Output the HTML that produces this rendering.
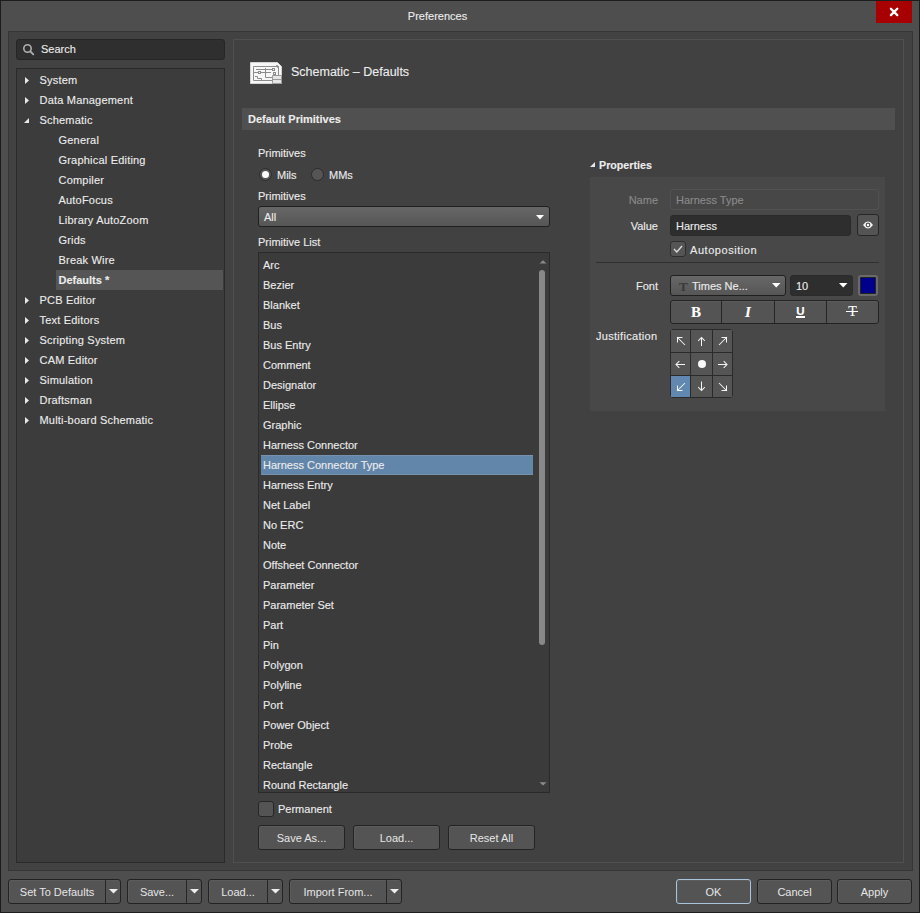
<!DOCTYPE html>
<html><head><meta charset="utf-8">
<style>
*{margin:0;padding:0;box-sizing:border-box}
html,body{width:920px;height:913px;overflow:hidden;background:#1c1c1c}
body{font-family:"Liberation Sans",sans-serif;font-size:11px;color:#ececec;position:relative}
.a{position:absolute}
.t{position:absolute;height:20px;line-height:20px;white-space:nowrap;-webkit-text-stroke:0.12px currentColor}
.b{font-weight:bold}
.btn{position:absolute;background:#545454;box-shadow:inset 1px 1px #5c5c5c;border:1px solid #232323;border-radius:3px;text-align:center;color:#e6e6e6;line-height:24px;height:25px}
.split{position:absolute;top:0;bottom:0;width:1px;background:#262626}
</style></head><body>
<div class="a" style="left:1px;top:1px;width:918px;height:911px;background:#4e4e4e"></div>
<div class="t" style="left:0;top:6px;width:875px;text-align:center">Preferences</div>
<div class="a" style="left:876px;top:1px;width:36px;height:22px;background:#a80000"></div>
<svg class="a" style="left:889px;top:6px" width="11" height="11"><path d="M1.9 2.7L8.3 9.1M8.3 2.7L1.9 9.1" stroke="#fff" stroke-width="2.3" stroke-linecap="round"/></svg>

<!-- content frame -->
<div class="a" style="left:8px;top:31px;width:905px;height:840px;background:#424242;border:1px solid #363636"></div>

<!-- search -->
<div class="a" style="left:16px;top:39px;width:209px;height:21px;background:#2f2f2f;border:1px solid #262626;border-radius:3px"></div>
<svg class="a" style="left:22px;top:43px" width="14" height="14"><circle cx="5.5" cy="5.5" r="3.7" fill="none" stroke="#b0b0b0" stroke-width="1.6"/><path d="M8.3 8.3L11.3 11.3" stroke="#b0b0b0" stroke-width="1.8" stroke-linecap="round"/></svg>
<div class="t" style="left:41px;top:39px">Search</div>

<!-- tree -->
<div class="a" style="left:16px;top:68px;width:209px;height:795px;background:#3c3c3c;border:1px solid #2a2a2a"></div>
<div class="t " style="left:39.5px;top:70px;letter-spacing:0.2px">System</div>
<svg class="a" style="left:24px;top:76px" width="6" height="9"><path d="M1 1L5 4.5L1 8Z" fill="#e8e8e8"/></svg>
<div class="t " style="left:39.5px;top:90px;letter-spacing:0.2px">Data Management</div>
<svg class="a" style="left:24px;top:96px" width="6" height="9"><path d="M1 1L5 4.5L1 8Z" fill="#e8e8e8"/></svg>
<div class="t " style="left:39.5px;top:110px;letter-spacing:0.2px">Schematic</div>
<svg class="a" style="left:23px;top:117px" width="7" height="7"><path d="M1 6L6 1L6 6Z" fill="#e8e8e8"/></svg>
<div class="t " style="left:58.5px;top:130px;letter-spacing:0.2px">General</div>
<div class="t " style="left:58.5px;top:150px;letter-spacing:0.2px">Graphical Editing</div>
<div class="t " style="left:58.5px;top:170px;letter-spacing:0.2px">Compiler</div>
<div class="t " style="left:58.5px;top:190px;letter-spacing:0.2px">AutoFocus</div>
<div class="t " style="left:58.5px;top:210px;letter-spacing:0.2px">Library AutoZoom</div>
<div class="t " style="left:58.5px;top:230px;letter-spacing:0.2px">Grids</div>
<div class="t " style="left:58.5px;top:250px;letter-spacing:0.2px">Break Wire</div>
<div class="a" style="left:56px;top:270px;width:167px;height:20px;background:#555555"></div>
<div class="t b" style="left:58.5px;top:270px;font-size:11px">Defaults *</div>
<div class="t " style="left:39.5px;top:290px;letter-spacing:0.2px">PCB Editor</div>
<svg class="a" style="left:24px;top:296px" width="6" height="9"><path d="M1 1L5 4.5L1 8Z" fill="#e8e8e8"/></svg>
<div class="t " style="left:39.5px;top:310px;letter-spacing:0.2px">Text Editors</div>
<svg class="a" style="left:24px;top:316px" width="6" height="9"><path d="M1 1L5 4.5L1 8Z" fill="#e8e8e8"/></svg>
<div class="t " style="left:39.5px;top:330px;letter-spacing:0.2px">Scripting System</div>
<svg class="a" style="left:24px;top:336px" width="6" height="9"><path d="M1 1L5 4.5L1 8Z" fill="#e8e8e8"/></svg>
<div class="t " style="left:39.5px;top:350px;letter-spacing:0.2px">CAM Editor</div>
<svg class="a" style="left:24px;top:356px" width="6" height="9"><path d="M1 1L5 4.5L1 8Z" fill="#e8e8e8"/></svg>
<div class="t " style="left:39.5px;top:370px;letter-spacing:0.2px">Simulation</div>
<svg class="a" style="left:24px;top:376px" width="6" height="9"><path d="M1 1L5 4.5L1 8Z" fill="#e8e8e8"/></svg>
<div class="t " style="left:39.5px;top:390px;letter-spacing:0.2px">Draftsman</div>
<svg class="a" style="left:24px;top:396px" width="6" height="9"><path d="M1 1L5 4.5L1 8Z" fill="#e8e8e8"/></svg>
<div class="t " style="left:39.5px;top:410px;letter-spacing:0.2px">Multi-board Schematic</div>
<svg class="a" style="left:24px;top:416px" width="6" height="9"><path d="M1 1L5 4.5L1 8Z" fill="#e8e8e8"/></svg>

<!-- right panel -->
<div class="a" style="left:233px;top:39px;width:671px;height:824px;background:#414141;border:1px solid #505050"></div>

<!-- header icon -->
<svg class="a" style="left:250px;top:62px" width="33" height="23" viewBox="0 0 33 23">
 <path d="M0.5 0.5H27.5L31.5 4.5V21.5H0.5Z" fill="#f7f7f7" stroke="#d4d4d4"/>
 <path d="M26.5 3.5L28.5 5.5" stroke="#444" stroke-width="1.2"/>
 <path d="M3.5 4.5H28.5V18.5H3.5Z" fill="none" stroke="#8c8c8c"/>
 <path d="M6 7.5H22M4 10.5H8M11 10.5H21M15.5 6V15.5H22M5 14.5H7.5V16.5H11.5V18" stroke="#8c8c8c" fill="none"/>
 <rect x="8.5" y="9.5" width="2" height="2" fill="none" stroke="#8c8c8c"/>
 <rect x="22.5" y="6.5" width="2" height="2" fill="none" stroke="#8c8c8c"/>
 <rect x="23.5" y="10.5" width="2" height="2" fill="none" stroke="#8c8c8c"/>
 <path d="M22.5 13.5H31.5V21.5H22.5Z" fill="#e6e6e6" stroke="#9a9a9a"/>
 <path d="M22.5 17.5H31.5" stroke="#9a9a9a"/>
</svg>
<div class="t" style="left:291px;top:62px;font-size:12.5px">Schematic – Defaults</div>

<!-- section header -->
<div class="a" style="left:242px;top:108px;width:653px;height:22px;background:#505050"></div>
<div class="t b" style="left:248px;top:109px;font-size:11px">Default Primitives</div>

<div class="t" style="left:258px;top:143px">Primitives</div>
<div class="a" style="left:258.5px;top:167.5px;width:13px;height:13px;border-radius:50%;background:#555;border:1px solid #2c2c2c"></div>
<div class="a" style="left:261.5px;top:170.5px;width:7px;height:7px;border-radius:50%;background:#fff"></div>
<div class="t" style="left:277px;top:165px">Mils</div>
<div class="a" style="left:310.5px;top:167.5px;width:13px;height:13px;border-radius:50%;background:#555;border:1px solid #2c2c2c"></div>
<div class="t" style="left:329px;top:165px">MMs</div>

<div class="t" style="left:258px;top:186px">Primitives</div>
<div class="a" style="left:258px;top:206px;width:292px;height:21px;background:linear-gradient(#676767,#565656);border:1px solid #202020;border-radius:3px"></div>
<div class="t" style="left:264px;top:207px">All</div>
<svg class="a" style="left:536px;top:215px" width="9" height="5"><path d="M0 0H8L4 4.5Z" fill="#fff"/></svg>

<div class="t" style="left:258px;top:232px">Primitive List</div>
<div class="a" style="left:258px;top:252px;width:292px;height:541px;background:#3b3b3b;border:1px solid #2a2a2a"></div>
<div class="a" style="left:0;top:0;width:920px;height:792px;overflow:hidden"><div class="t " style="left:263px;top:255px;">Arc</div>
<div class="t " style="left:263px;top:275px;">Bezier</div>
<div class="t " style="left:263px;top:295px;">Blanket</div>
<div class="t " style="left:263px;top:315px;">Bus</div>
<div class="t " style="left:263px;top:335px;">Bus Entry</div>
<div class="t " style="left:263px;top:355px;">Comment</div>
<div class="t " style="left:263px;top:375px;">Designator</div>
<div class="t " style="left:263px;top:395px;">Ellipse</div>
<div class="t " style="left:263px;top:415px;">Graphic</div>
<div class="t " style="left:263px;top:435px;">Harness Connector</div>
<div class="a" style="left:261px;top:455px;width:272px;height:20px;background:#6285aa;box-shadow:inset 0 1px #7691ae,inset 0 -1px #7691ae"></div>
<div class="t " style="left:263px;top:455px;">Harness Connector Type</div>
<div class="t " style="left:263px;top:475px;">Harness Entry</div>
<div class="t " style="left:263px;top:495px;">Net Label</div>
<div class="t " style="left:263px;top:515px;">No ERC</div>
<div class="t " style="left:263px;top:535px;">Note</div>
<div class="t " style="left:263px;top:555px;">Offsheet Connector</div>
<div class="t " style="left:263px;top:575px;">Parameter</div>
<div class="t " style="left:263px;top:595px;">Parameter Set</div>
<div class="t " style="left:263px;top:615px;">Part</div>
<div class="t " style="left:263px;top:635px;">Pin</div>
<div class="t " style="left:263px;top:655px;">Polygon</div>
<div class="t " style="left:263px;top:675px;">Polyline</div>
<div class="t " style="left:263px;top:695px;">Port</div>
<div class="t " style="left:263px;top:715px;">Power Object</div>
<div class="t " style="left:263px;top:735px;">Probe</div>
<div class="t " style="left:263px;top:755px;">Rectangle</div>
<div class="t " style="left:263px;top:775px;">Round Rectangle</div></div>
<svg class="a" style="left:538.5px;top:259.5px" width="8" height="4"><path d="M0.5 3.5H7.5L4 0.2Z" fill="#8c8c8c"/></svg>
<div class="a" style="left:539px;top:270px;width:6px;height:375px;border-radius:3px;background:#888"></div>
<svg class="a" style="left:538.5px;top:781.5px" width="8" height="4"><path d="M0.5 0.2H7.5L4 3.5Z" fill="#8c8c8c"/></svg>
<div class="a" style="left:259px;top:792px;width:290px;height:1px;background:#2a2a2a"></div>

<div class="a" style="left:258px;top:801px;width:16px;height:16px;border-radius:3px;background:#545454;border:1px solid #262626"></div>
<div class="t" style="left:278px;top:799px">Permanent</div>

<div class="btn" style="left:258px;top:825px;width:87px">Save As...</div>
<div class="btn" style="left:353px;top:825px;width:87px">Load...</div>
<div class="btn" style="left:448px;top:825px;width:87px">Reset All</div>

<!-- Properties -->
<svg class="a" style="left:589px;top:161px" width="7" height="7"><path d="M1 6L6 1L6 6Z" fill="#e8e8e8"/></svg>
<div class="t b" style="left:599px;top:155px;font-size:10.7px">Properties</div>
<div class="a" style="left:590px;top:177px;width:295px;height:234px;background:#484848"></div>

<div class="t" style="left:600px;top:190px;width:58px;text-align:right;color:#8a8a8a">Name</div>
<div class="a" style="left:670px;top:189px;width:209px;height:21px;background:#474747;border:1px solid #525252;border-radius:3px"></div>
<div class="t" style="left:676px;top:190px;color:#8a8a8a">Harness Type</div>

<div class="t" style="left:600px;top:216px;width:58px;text-align:right">Value</div>
<div class="a" style="left:670px;top:215px;width:181px;height:21px;background:#2e2e2e;border:1px solid #2a2a2a;border-radius:3px"></div>
<div class="t" style="left:676px;top:216px">Harness</div>
<div class="a" style="left:857px;top:214px;width:22px;height:22px;background:#545454;border:1px solid #262626;border-radius:3px"></div>
<svg class="a" style="left:862px;top:220px" width="12" height="10"><path d="M1 5Q6 -1.8 11 5Q6 11.8 1 5Z" fill="#fafafa"/><circle cx="6" cy="5" r="2.4" fill="#545454"/><circle cx="6" cy="5" r="1.2" fill="#fff"/></svg>

<div class="a" style="left:670px;top:241px;width:16px;height:16px;border-radius:3px;background:#555;border:1px solid #2e2e2e"></div>
<svg class="a" style="left:672px;top:244px" width="12" height="10"><path d="M2 5L4.8 8L10 2" stroke="#ddd" stroke-width="1.3" fill="none"/></svg>
<div class="t" style="left:690px;top:240px;letter-spacing:0.55px">Autoposition</div>

<div class="a" style="left:596px;top:262px;width:283px;height:1px;background:#2f2f2f"></div>

<div class="t" style="left:600px;top:276px;width:58px;text-align:right">Font</div>
<div class="a" style="left:670px;top:275px;width:116px;height:21px;background:linear-gradient(#676767,#565656);border:1px solid #202020;border-radius:3px"></div>
<div class="t" style="left:679px;top:276.5px;color:#3a3a3a;font-family:'Liberation Serif',serif;font-weight:bold;font-size:13px">T</div>
<div class="t" style="left:692px;top:276px">Times Ne...</div>
<svg class="a" style="left:771.5px;top:283px" width="9" height="5"><path d="M0 0H8.5L4.25 4.5Z" fill="#fff"/></svg>
<div class="a" style="left:790px;top:275px;width:63px;height:21px;background:#2e2e2e;border:1px solid #2a2a2a;border-radius:3px"></div>
<div class="t" style="left:796px;top:276px">10</div>
<svg class="a" style="left:839px;top:283px" width="9" height="5"><path d="M0 0H8.5L4.25 4.5Z" fill="#fff"/></svg>
<div class="a" style="left:858px;top:275px;width:20px;height:21px;background:#00008c;border:2px solid #6a6a6a;border-radius:3px;box-shadow:inset 0 0 0 1px #222"></div>

<div class="a" style="left:670px;top:300px;width:209px;height:24px;background:#545454;box-shadow:inset 0 1px #5c5c5c;border:1px solid #232323;border-radius:3px"></div>
<div class="a" style="left:721px;top:301px;width:1px;height:22px;background:#262626"></div>
<div class="a" style="left:774px;top:301px;width:1px;height:22px;background:#262626"></div>
<div class="a" style="left:826px;top:301px;width:1px;height:22px;background:#262626"></div>
<div class="t" style="left:671px;top:302px;width:50px;text-align:center;font-family:'Liberation Serif',serif;font-weight:bold;font-size:15px;color:#fff">B</div>
<div class="t" style="left:722px;top:302px;width:52px;text-align:center;font-family:'Liberation Serif',serif;font-style:italic;font-weight:bold;font-size:15px;color:#fff">I</div>
<div class="t" style="left:775px;top:301px;width:51px;text-align:center;font-weight:bold;font-size:11.5px;color:#fff">U</div>
<div class="a" style="left:796px;top:316px;width:9px;height:1.5px;background:#fff"></div>
<div class="t" style="left:827px;top:302px;width:51px;text-align:center;font-family:'Liberation Serif',serif;font-size:14px;color:#fff">T</div>
<div class="a" style="left:846px;top:311px;width:12px;height:1.3px;background:#fff"></div>
<div class="t" style="left:596px;top:326px;letter-spacing:0.3px">Justification</div>
<div id="jg" class="a" style="left:670px;top:329px;width:63px;height:69px;background:#2a2a2a;border-radius:4px;overflow:hidden">
 <div class="a" style="left:1px;top:1px;width:19px;height:22px;background:#555"></div>
 <div class="a" style="left:21px;top:1px;width:21px;height:22px;background:#555"></div>
 <div class="a" style="left:43px;top:1px;width:19px;height:22px;background:#555"></div>
 <div class="a" style="left:1px;top:24px;width:19px;height:22px;background:#555"></div>
 <div class="a" style="left:21px;top:24px;width:21px;height:22px;background:#555"></div>
 <div class="a" style="left:43px;top:24px;width:19px;height:22px;background:#555"></div>
 <div class="a" style="left:1px;top:47px;width:19px;height:21px;background:#6088b0"></div>
 <div class="a" style="left:21px;top:47px;width:21px;height:21px;background:#555"></div>
 <div class="a" style="left:43px;top:47px;width:19px;height:21px;background:#555"></div>
 <svg class="a" style="left:0;top:0" width="63" height="69" fill="none" stroke="#f4f4f4" stroke-width="1.05">
  <path d="M7 8L15 16M7 8.5H12.5M7.5 8V13.5"/>
  <path d="M31.5 8.5V17M28.2 11.8L31.5 8.5L34.8 11.8"/>
  <path d="M57 8L49 16M57 8.5H51.5M56.5 8V13.5"/>
  <path d="M6 35.5H15M9.3 32.2L6 35.5L9.3 38.8"/>
  <path d="M48 35.5H57M53.7 32.2L57 35.5L53.7 38.8"/>
  <path d="M7 62L15 54M7 61.5H12.5M7.5 62V56.5"/>
  <path d="M31.5 52.5V61.5M28.2 58.2L31.5 61.5L34.8 58.2"/>
  <path d="M57 62L49 54M57 61.5H51.5M56.5 62V56.5"/>
 </svg>
 <div class="a" style="left:28px;top:31px;width:8px;height:8px;border-radius:50%;background:#f8f8f8"></div>
</div>

<!-- bottom bar -->
<div class="btn" style="left:8px;top:879px;width:113px"><div class="a" style="left:0;top:0;width:96px;text-align:center">Set To Defaults</div><div class="split" style="left:96px"></div><svg class="a" style="left:100px;top:9px" width="9" height="5"><path d="M0 0H9L4.5 4.5Z" fill="#eee"/></svg></div>
<div class="btn" style="left:127px;top:879px;width:75px"><div class="a" style="left:0;top:0;width:58px;text-align:center">Save...</div><div class="split" style="left:58px"></div><svg class="a" style="left:62px;top:9px" width="9" height="5"><path d="M0 0H9L4.5 4.5Z" fill="#eee"/></svg></div>
<div class="btn" style="left:208px;top:879px;width:75px"><div class="a" style="left:0;top:0;width:58px;text-align:center">Load...</div><div class="split" style="left:58px"></div><svg class="a" style="left:62px;top:9px" width="9" height="5"><path d="M0 0H9L4.5 4.5Z" fill="#eee"/></svg></div>
<div class="btn" style="left:289px;top:879px;width:113px"><div class="a" style="left:0;top:0;width:96px;text-align:center">Import From...</div><div class="split" style="left:96px"></div><svg class="a" style="left:100px;top:9px" width="9" height="5"><path d="M0 0H9L4.5 4.5Z" fill="#eee"/></svg></div>

<div class="btn" style="left:676px;top:879px;width:75px;border-color:#a8c4dc">OK</div>
<div class="btn" style="left:757px;top:879px;width:75px">Cancel</div>
<div class="btn" style="left:837px;top:879px;width:75px">Apply</div>
</body></html>
